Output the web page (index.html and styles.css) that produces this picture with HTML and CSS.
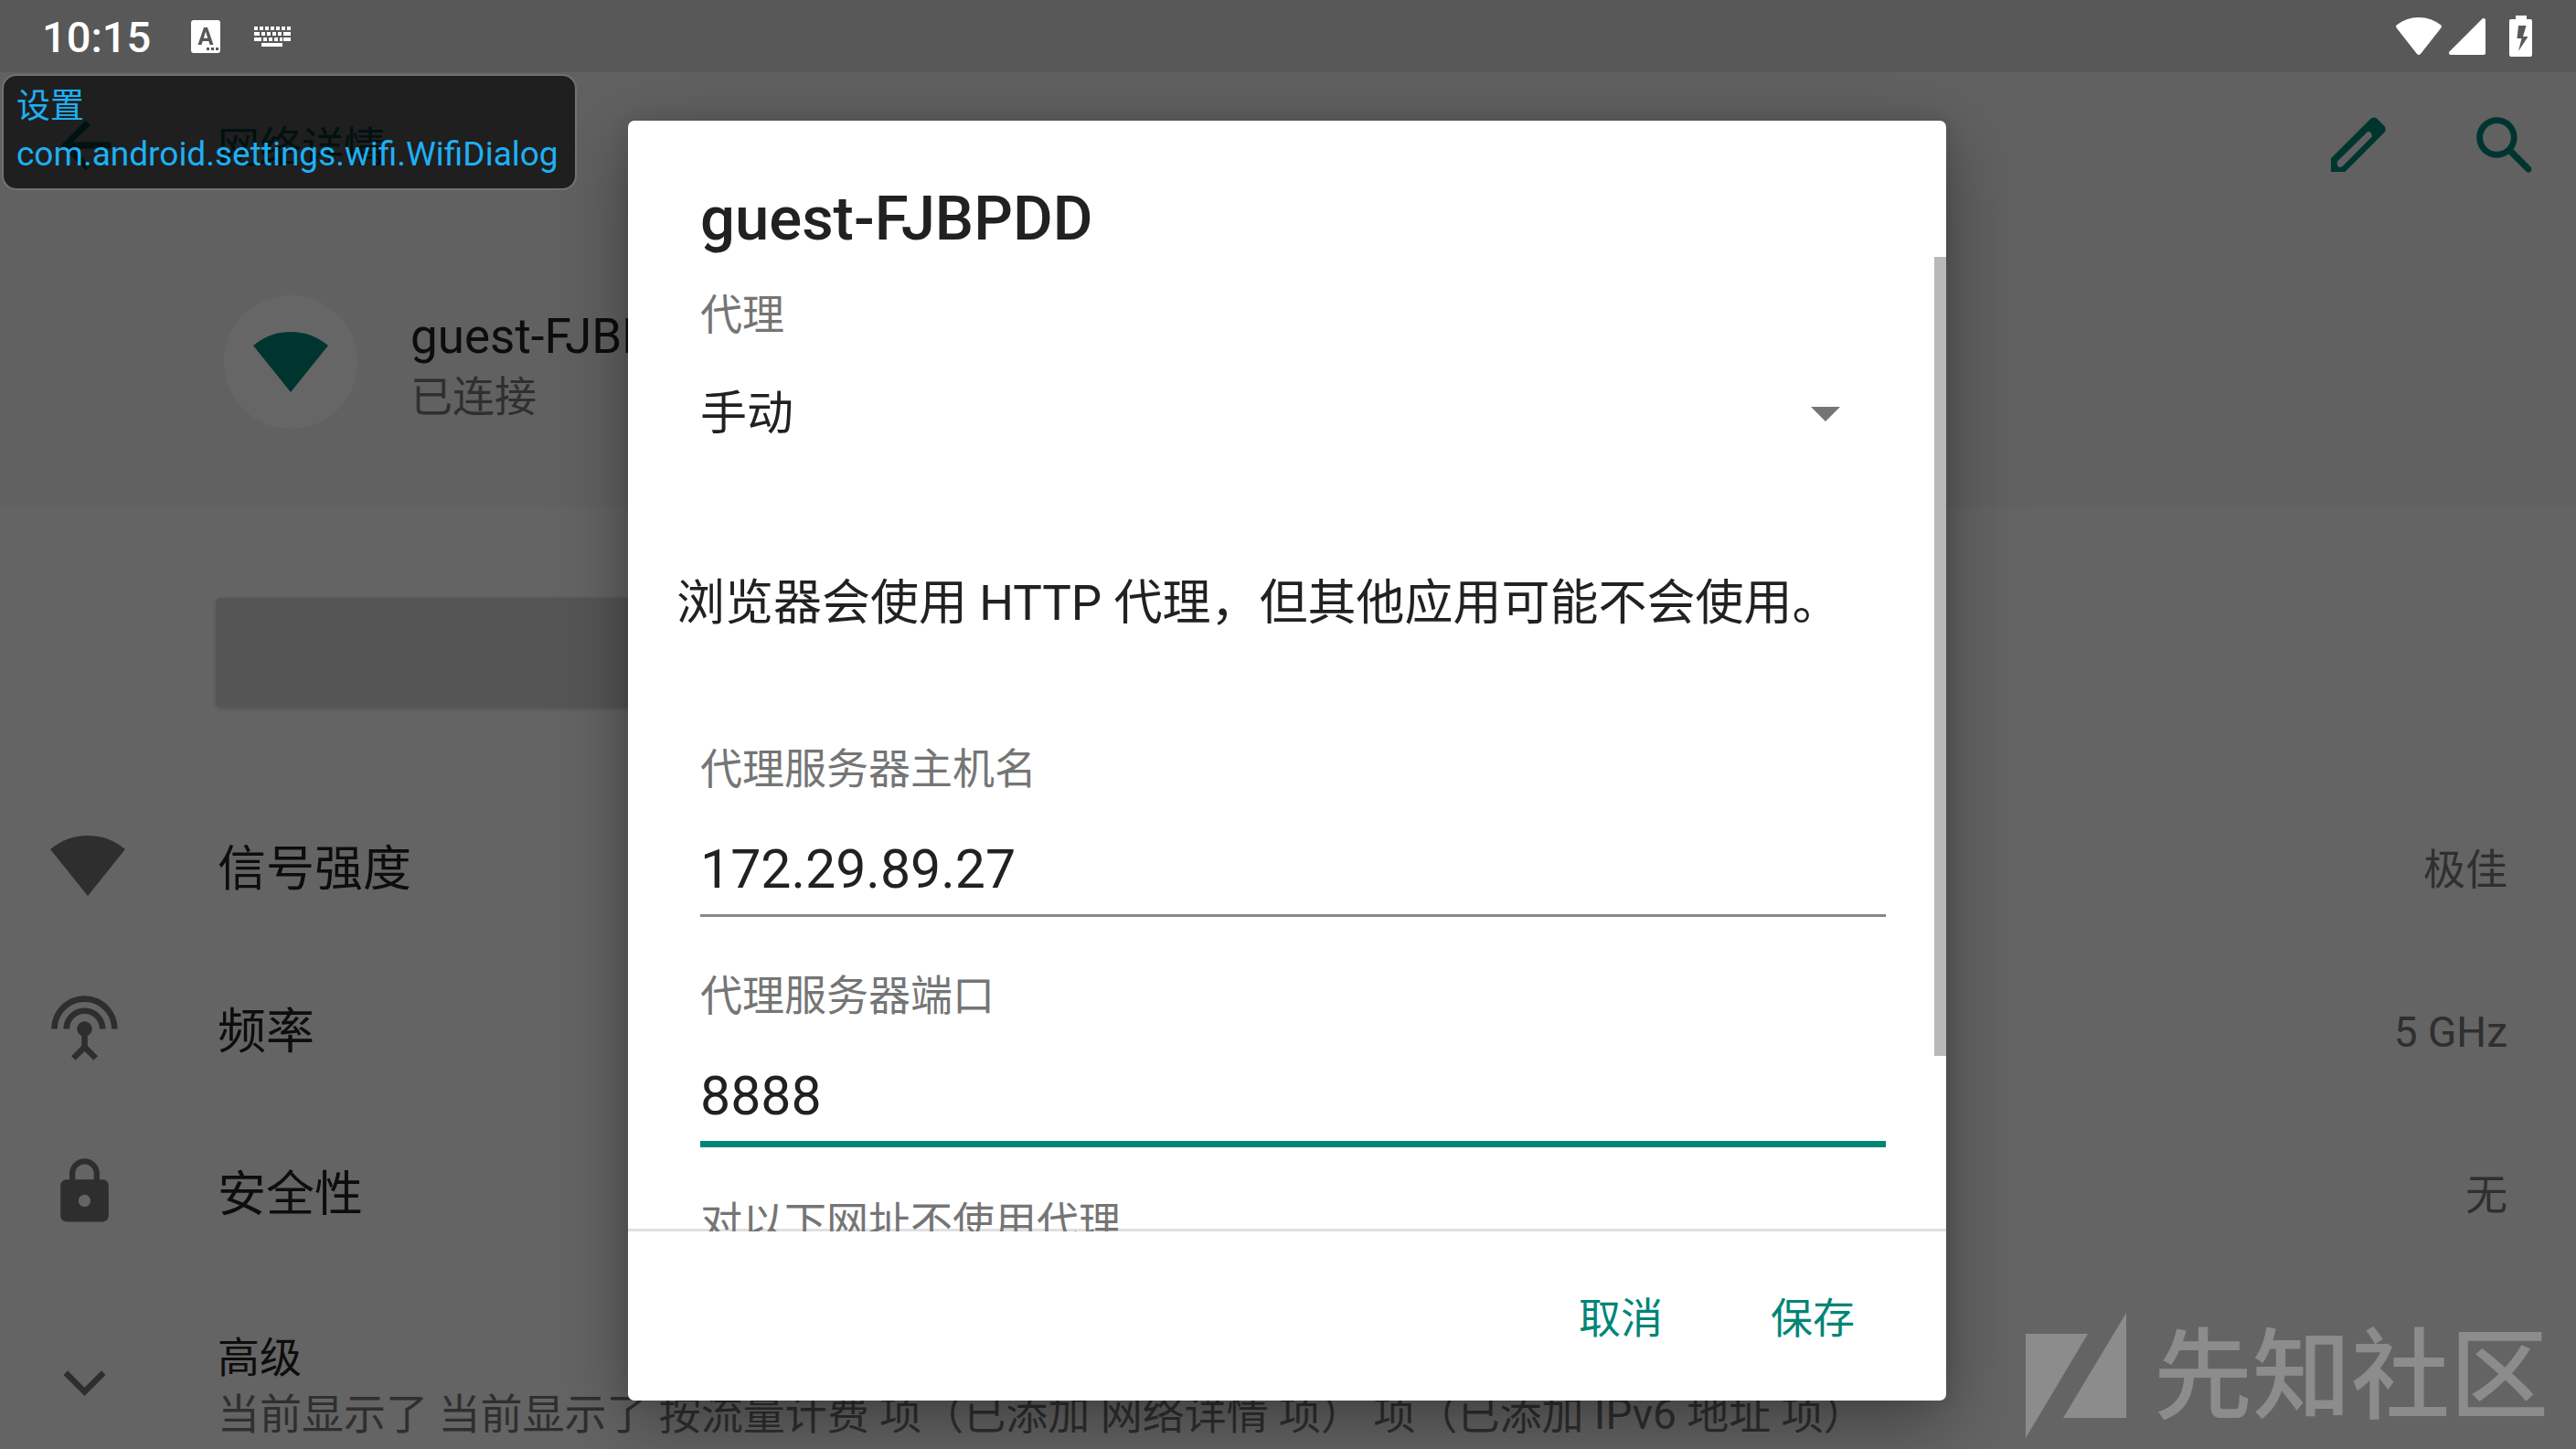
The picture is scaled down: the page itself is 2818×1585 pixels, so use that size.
FILE: index.html
```html
<!DOCTYPE html>
<html lang="zh-CN">
<head>
<meta charset="utf-8">
<meta name="viewport" content="width=device-width, initial-scale=1">
<title>网络详情</title>
<link rel="stylesheet" href="styles.css">
</head>
<body>
<header class="status">
  <span class="clock">10:15</span>
  <svg class="status-ime" viewBox="0 0 32 36" aria-hidden="true"><path fill-rule="evenodd" d="M3 0h26q3 0 3 3v30q0 3-3 3H3q-3 0-3-3V3q0-3 3-3zM14 8L7.500 27h4l1.200-4h6.600l1.200 4h4L18 8zM16 12.500l2.200 7.300h-4.400zM17 30v3h3v-3zM22 30v3h3v-3zM27 30v3h3v-3z"/></svg>
  <svg class="status-kbd" viewBox="0 0 40 22" aria-hidden="true"><path d="M0 0h4v4H0zM6 0h4v4H6zM12 0h4v4h-4zM18 0h4v4h-4zM24 0h4v4h-4zM30 0h4v4h-4zM36 0h4v4h-4zM0 6h6v4H0zM8 6h4v4H8zM14 6h4v4h-4zM20 6h4v4h-4zM26 6h4v4h-4zM32 6h8v4h-8zM0 12h8v4H0zM10 12h4v4h-4zM16 12h4v4h-4zM22 12h4v4h-4zM28 12h3v4h-3zM32 12h8v4h-8zM8 18h23v4H8z"/></svg>
  <div class="status-right">
    <svg class="status-wifi" viewBox="0 0 50 42" aria-hidden="true"><path d="M0 9Q11 0 25 0t25 9q0 2-1 3L27 40q-2 2-4 0L1 12q-1-1-1-3z"/></svg>
    <svg class="status-cell" viewBox="0 0 40 40" aria-hidden="true"><path d="M37 0h1q2 0 2 2v36q0 2-2 2H2q-2 0-2-2v-1z"/></svg>
    <svg class="status-battery" viewBox="0 0 25 45" aria-hidden="true"><path fill-rule="evenodd" d="M7 0h12v4h4q2 0 2 2v37q0 2-2 2H2q-2 0-2-2V6q0-2 2-2h5zM10 11L8.500 25h5L10 39l10.500-16H15l3.500-12z"/></svg>
  </div>
</header>

<main class="screen">
  <div class="top">
    <div class="appbar">
      <button class="icon-btn back" aria-label="返回"><svg viewBox="0 0 24 24"><path d="M20 11H7.830l5.590-5.590L12 4l-8 8 8 8 1.410-1.410L7.830 13H20z"/></svg></button>
      <h1 class="appbar-title">网络详情</h1>
      <div class="actions">
        <button class="icon-btn" aria-label="修改"><svg viewBox="0 0 24 24"><path fill-rule="evenodd" d="M2.900 16.200L15.500 3.600Q16.600 2.600 17.700 3.500L20 5.800Q20.900 6.900 19.900 8L7.400 20.500H2.900zM4.900 17.200V18.300L5.500 19L6.500 18.800L16 9.200V8.600L15.400 7.600L14.600 7.700z"/></svg></button>
        <button class="icon-btn" aria-label="搜索"><svg viewBox="0 0 24 24"><path d="M20.490 19l-5.730-5.730C15.530 12.200 16 10.910 16 9.500 16 5.910 13.090 3 9.500 3S3 5.910 3 9.500 5.910 16 9.500 16c1.410 0 2.700-.47 3.770-1.240L19 20.490q.8.5 1.300-.1t.19-1.390zM5 9.500C5 7.010 7.010 5 9.500 5S14 7.010 14 9.500 11.990 14 9.500 14 5 11.990 5 9.500z"/></svg></button>
      </div>
    </div>
    <div class="network">
      <span class="avatar"><svg class="fan" viewBox="0 0 82 66" aria-hidden="true"><path d="M0 15Q18 0 41 0t41 15L41 66z"/></svg></span>
      <div class="network-text">
        <p class="primary">guest-FJBPDD</p>
        <p class="secondary">已连接</p>
      </div>
    </div>
  </div>

  <div class="forget"><button class="forget-btn" aria-label="取消保存"></button></div>

  <ul class="details">
    <li class="row">
      <svg class="fan" viewBox="0 0 82 66" aria-hidden="true"><path d="M0 15Q18 0 41 0t41 15L41 66z"/></svg>
      <span class="primary">信号强度</span><span class="secondary">极佳</span>
    </li>
    <li class="row">
      <svg class="glyph" viewBox="0 0 24 24" aria-hidden="true"><path d="M12 5c-3.870 0-7 3.130-7 7h2c0-2.760 2.240-5 5-5s5 2.240 5 5h2c0-3.870-3.130-7-7-7zm1 9.290c.88-.39 1.500-1.260 1.500-2.290 0-1.380-1.120-2.500-2.500-2.500S9.500 10.620 9.500 12c0 1.020.62 1.900 1.500 2.290v3.300L7.590 21 9 22.410l3-3 3 3L16.410 21 13 17.590v-3.300zM12 1C5.930 1 1 5.930 1 12h2c0-4.970 4.030-9 9-9s9 4.030 9 9h2c0-6.070-4.930-11-11-11z"/></svg>
      <span class="primary">频率</span><span class="secondary">5 GHz</span>
    </li>
    <li class="row">
      <svg class="glyph" viewBox="0 0 24 24" aria-hidden="true"><path fill-rule="evenodd" d="M18 8h-1V6c0-2.760-2.240-5-5-5S7 3.240 7 6v2H6c-1.100 0-2 .9-2 2v10c0 1.100.9 2 2 2h12c1.100 0 2-.9 2-2V10c0-1.100-.9-2-2-2zm-6 9c-1.100 0-2-.9-2-2s.9-2 2-2 2 .9 2 2-.9 2-2 2zm3.100-9H8.900V6c0-1.710 1.390-3.100 3.100-3.100 1.710 0 3.100 1.390 3.100 3.100v2z"/></svg>
      <span class="primary">安全性</span><span class="secondary">无</span>
    </li>
    <li class="row row-advanced">
      <svg class="glyph" viewBox="0 0 24 24" aria-hidden="true"><path d="M17.600 8L12 13.600 6.400 8 5 9.400l7 7 7-7z"/></svg>
      <div>
        <p class="advanced-title">高级</p>
        <p class="secondary">当前显示了 当前显示了 按流量计费 项（已添加 网络详情 项） 项（已添加 IPv6 地址 项）</p>
      </div>
    </li>
  </ul>
</main>

<div class="scrim">
  <form class="dialog" role="dialog" aria-labelledby="dialog-title">
    <h2 class="dialog-title" id="dialog-title">guest-FJBPDD</h2>
    <div class="dialog-body">
      <label class="label" for="proxy">代理</label>
      <div class="select-wrap">
        <select class="select" id="proxy"><option>手动</option></select>
        <svg class="caret" viewBox="0 0 32 16" aria-hidden="true"><path d="M0 0h32L16 16z"/></svg>
      </div>
      <p class="message">浏览器会使用 HTTP 代理，但其他应用可能不会使用。</p>
      <label class="label" for="host">代理服务器主机名</label>
      <input class="input" id="host" type="text" value="172.29.89.27">
      <label class="label" for="port">代理服务器端口</label>
      <input class="input input-active" id="port" type="text" value="8888">
      <label class="label" for="bypass">对以下网址不使用代理</label>
      <input class="input" id="bypass" type="text">
      <span class="thumb"></span>
    </div>
    <div class="dialog-actions">
      <button class="text-btn" type="button">取消</button>
      <button class="text-btn" type="button">保存</button>
    </div>
  </form>
</div>

<aside class="activity-tag">
  <p>设置</p>
  <p>com.android.settings.wifi.WifiDialog</p>
</aside>

<div class="watermark">
  <svg class="watermark-logo" viewBox="0 0 110 137" aria-hidden="true"><path d="M0 23h68L0 137zM110 0v115H41z"/></svg>
  <span>先知社区</span>
</div>
</body>
</html>
```
FILE: styles.css
```css
:root {
  --teal: #008577;
  --text: #212121;
  --muted: #757575;
  --status-height: 79px;
  --gutter: 238px;
}

* {
  box-sizing: border-box;
  margin: 0;
}

body {
  position: relative;
  display: flex;
  flex-direction: column;
  height: 100vh;
  overflow: hidden;
  background: #fafafa;
  color: var(--text);
  font: 400 46px/62px Roboto, "Noto Sans CJK SC", sans-serif;
}

button,
input,
select {
  border: 0;
  border-radius: 0;
  padding: 0;
  background: none;
  color: inherit;
  font: inherit;
  outline: 0;
}

svg {
  display: block;
  fill: currentColor;
}

/* Status bar */
.status {
  display: flex;
  align-items: center;
  flex: none;
  height: var(--status-height);
  padding: 0 48px 0 46px;
  background: #585858;
  color: #fff;
}

.clock {
  padding-top: 2px;
  font-size: 47px;
  font-weight: 500;
}

.status-ime {
  width: 32px;
  height: 36px;
  margin-left: 44px;
}

.status-kbd {
  width: 40px;
  height: 22px;
  margin-left: 37px;
}

.status-right {
  display: flex;
  align-items: center;
  margin-left: auto;
}

.status-wifi {
  width: 50px;
  height: 42px;
}

.status-cell {
  width: 40px;
  height: 40px;
  margin: 0 26px 0 8px;
}

.status-battery {
  width: 25px;
  height: 45px;
}

/* Network details screen */
.screen {
  flex: 1;
  min-height: 0;
}

.top {
  background: #f2f2f2;
  padding-bottom: 86px;
}

.appbar {
  display: grid;
  grid-template-columns: var(--gutter) 1fr auto;
  align-items: center;
  height: 160px;
  padding-right: 37px;
}

.icon-btn {
  width: 82px;
  height: 82px;
  color: var(--teal);
}

.back {
  margin-left: 53px;
}

.appbar-title {
  padding-top: 4px;
  color: var(--teal);
  font-size: 46px;
  font-weight: 400;
}

.actions {
  display: flex;
  gap: 77px;
}

.network {
  display: flex;
  align-items: center;
  gap: 58px;
  padding: 84px 0 0 245px;
}

.network-text {
  padding-top: 6px;
}

.avatar {
  display: grid;
  place-items: center;
  width: 146px;
  height: 146px;
  border-radius: 50%;
  background: #fff;
  color: var(--teal);
}

.fan {
  width: 82px;
  height: 66px;
}

.primary {
  font-size: 53px;
  line-height: 70px;
}

.secondary {
  color: var(--muted);
}

.forget {
  padding: 99px 0 88px 236px;
}

.forget-btn {
  display: block;
  width: 45%;
  height: 120px;
  border-radius: 6px;
  background: #d5d5d5;
  box-shadow: 0 1px 5px #ccc;
}

.details {
  padding: 0;
  list-style: none;
}

.row {
  display: grid;
  grid-template-columns: var(--gutter) 1fr auto;
  align-items: center;
  height: 178px;
  padding-right: 75px;
}

.row > svg {
  margin: 0 0 8px 53px;
  color: #737373;
}

.row > .fan {
  margin-left: 55px;
}

.glyph {
  width: 79px;
  height: 79px;
}

.row-advanced {
  height: 240px;
}

/* Dialog */
.scrim {
  position: absolute;
  inset: var(--status-height) 0 0;
  display: flex;
  justify-content: center;
  padding: 53px 2px 53px 0;
  background: rgba(0, 0, 0, 0.6);
}

.dialog {
  display: flex;
  flex-direction: column;
  width: 80%;
  max-width: 1442px;
  border-radius: 7px;
  background: #fff;
  box-shadow: 0 24px 80px rgba(0, 0, 0, 0.35), 0 0 20px rgba(0, 0, 0, 0.1);
}

.dialog-title {
  padding: 65px 80px 0 79px;
  font-size: 67px;
  font-weight: 500;
  line-height: 84px;
}

.dialog-body {
  position: relative;
  display: flex;
  flex: 1;
  flex-direction: column;
  min-height: 0;
  overflow: hidden;
  padding: 32px 66px 0 79px;
  box-shadow: inset 0 -3px 0 #e0e0e0;
}

.label {
  flex: none;
  color: var(--muted);
}

.select-wrap {
  display: grid;
  flex: none;
  align-items: center;
  margin: 32px 0 121px;
}

.select-wrap > * {
  grid-area: 1 / 1;
}

.select {
  width: 100%;
  height: 92px;
  appearance: none;
  font-size: 51px;
}

.caret {
  justify-self: end;
  width: 32px;
  height: 16px;
  margin-right: 50px;
  color: var(--muted);
  pointer-events: none;
}

.message {
  flex: none;
  margin: 0 -26px 110px;
  font-size: 53px;
  line-height: 80px;
  white-space: nowrap;
}

.input {
  flex: none;
  width: 100%;
  height: 103px;
  margin: 28px 0 55px;
  border-bottom: 3px solid #888;
  font-size: 59px;
}

.input-active {
  border-color: var(--teal);
  box-shadow: 0 4px 0 var(--teal);
}

.thumb {
  position: absolute;
  top: 0;
  right: 0;
  width: 13px;
  height: 82%;
  background: #b8b8b8;
}

.dialog-actions {
  display: flex;
  align-items: center;
  justify-content: flex-end;
  gap: 38px;
  height: 185px;
  padding: 4px 60px 0 0;
}

.text-btn {
  height: 120px;
  padding: 0 40px;
  color: var(--teal);
}

/* Foreground activity label */
.activity-tag {
  position: absolute;
  top: 81px;
  left: 2px;
  padding: 8px 18px 11px 14px;
  border: 2px solid #727272;
  border-radius: 16px;
  background: rgba(0, 0, 0, 0.68);
  color: #1eb0f4;
  font-size: 37px;
  line-height: 52px;
}

/* Site watermark */
.watermark {
  position: absolute;
  right: 30px;
  bottom: 10px;
  display: flex;
  align-items: center;
  gap: 30px;
  color: #8c8c8c;
  font-size: 108px;
  font-weight: 500;
  line-height: 137px;
}

.watermark span {
  padding-top: 4px;
}

.watermark-logo {
  width: 110px;
  height: 137px;
}
```
